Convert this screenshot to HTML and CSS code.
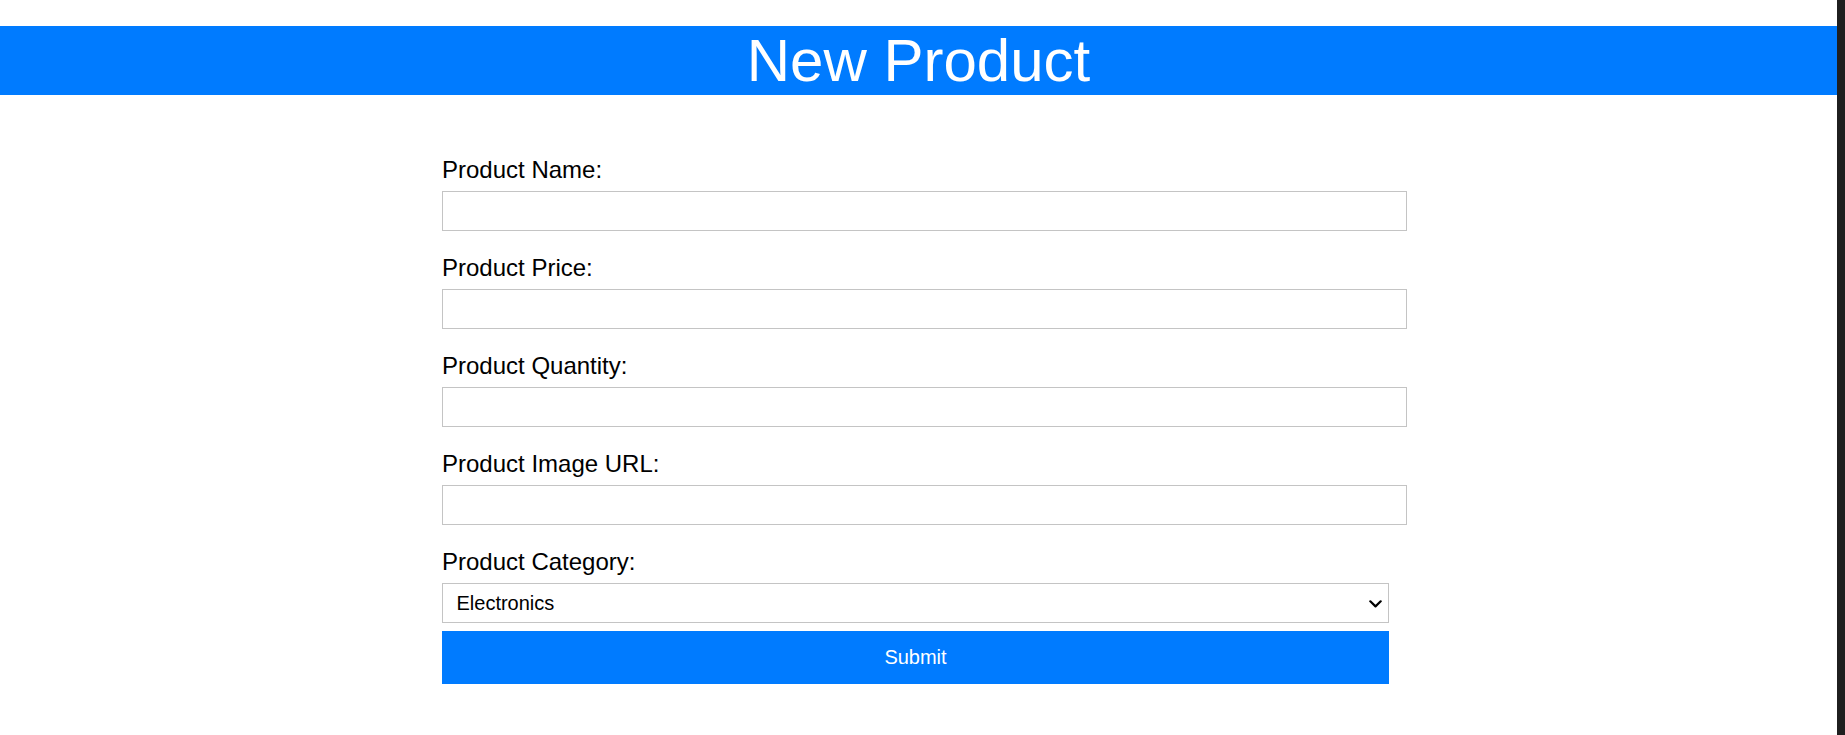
FILE: index.html
```html
<!DOCTYPE html>
<html lang="en">
<head>
<meta charset="utf-8">
<title>New Product</title>
<link rel="stylesheet" href="styles.css">
</head>
<body>
<div class="page">
  <main class="main">
    <h1 class="title">New Product</h1>
    <form class="form">
      <label class="label" for="name">Product Name:</label>
      <input class="field" id="name" type="text">
      <label class="label" for="price">Product Price:</label>
      <input class="field" id="price" type="text">
      <label class="label" for="qty">Product Quantity:</label>
      <input class="field" id="qty" type="text">
      <label class="label" for="img">Product Image URL:</label>
      <input class="field" id="img" type="text">
      <label class="label" for="cat">Product Category:</label>
      <div class="select-wrap">
        <select class="select" id="cat">
          <option>Electronics</option>
          <option>Clothing</option>
          <option>Books</option>
        </select>
        <svg class="chevron" width="13" height="8" viewBox="0 0 13 8" aria-hidden="true">
          <path d="M1.3 1.3 L6.5 6.4 L11.7 1.3" fill="none" stroke="#000" stroke-width="2.2" stroke-linecap="round" stroke-linejoin="round"/>
        </svg>
      </div>
      <button class="submit" type="submit">Submit</button>
    </form>
  </main>
  <div class="edge"></div>
</div>
</body>
</html>
```

FILE: styles.css
```css
html, body {
  margin: 0;
  height: 100%;
}

body {
  font-family: "Liberation Sans", Arial, sans-serif;
  background: #ffffff;
  color: #000000;
}

.page {
  display: flex;
  min-height: 100vh;
}

.main {
  flex: 1;
  padding-top: 26px;
}

.edge {
  width: 8px;
  background: #1f1f1f;
}

.title {
  margin: 0;
  height: 69px;
  background: #007bff;
  color: #ffffff;
  text-align: center;
  font-size: 60px;
  font-weight: normal;
  line-height: 69px;
}

.form {
  width: 947px;
  margin: 61px 0 0 442px;
}

.label {
  display: block;
  font-size: 24px;
  line-height: 27.5px;
  margin-bottom: 7.5px;
}

.field {
  display: block;
  box-sizing: border-box;
  width: calc(100% + 18px);
  height: 39.5px;
  margin: 0 0 23.5px 0;
  padding: 0 7.5px;
  border: 1px solid #c4c4c4;
  background: #ffffff;
  font: 20px "Liberation Sans", Arial, sans-serif;
  outline: none;
}

.select-wrap {
  position: relative;
  margin-bottom: 8px;
}

.select {
  display: block;
  box-sizing: border-box;
  width: 100%;
  height: 40px;
  padding: 0 40px 0 13.5px;
  border: 1px solid #c4c4c4;
  background: #ffffff;
  color: #000000;
  font: 20px "Liberation Sans", Arial, sans-serif;
  appearance: none;
  -webkit-appearance: none;
  border-radius: 0;
  outline: none;
}

.chevron {
  position: absolute;
  right: 7px;
  top: 16.5px;
  pointer-events: none;
}

.submit {
  display: block;
  width: 100%;
  height: 53px;
  border: none;
  border-radius: 0;
  background: #007bff;
  color: #ffffff;
  font: 20px "Liberation Sans", Arial, sans-serif;
  cursor: pointer;
}
```
